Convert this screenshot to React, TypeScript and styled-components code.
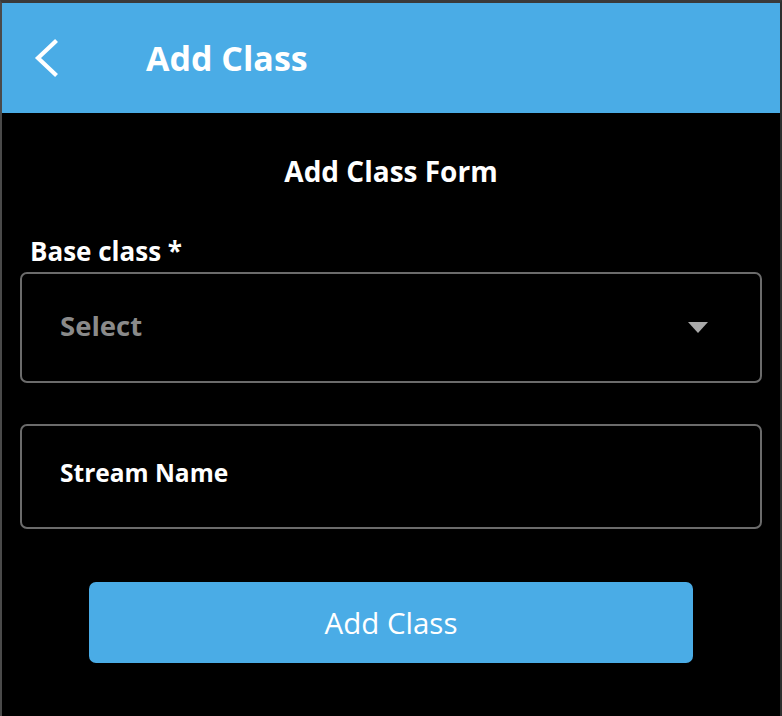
import React from "react";
import styled, { createGlobalStyle } from "styled-components";

const Global = createGlobalStyle`
  html, body { margin: 0; padding: 0; background: #000; }
  * { box-sizing: border-box; }
`;

const Frame = styled.div`
  width: 782px;
  height: 716px;
  background: #000;
  border-top: 3px solid #3a3a3a;
  border-left: 2px solid #4a4a4a;
  border-right: 2px solid #2e2e2e;
  font-family: "Open Sans", "Noto Sans", sans-serif;
  color: #fff;
  display: flex;
  flex-direction: column;
  overflow: hidden;
`;

const Header = styled.header`
  height: 110px;
  background: #4aace6;
  display: flex;
  align-items: center;
  padding-left: 30px;
`;

const BackButton = styled.button`
  background: none;
  border: none;
  padding: 0;
  width: 28px;
  height: 40px;
  display: flex;
  align-items: center;
  justify-content: center;
  cursor: pointer;
`;

const Title = styled.h1`
  margin: 0 0 0 86px;
  font-size: 34px;
  font-weight: 700;
  line-height: 40px;
`;

const Form = styled.form`
  display: flex;
  flex-direction: column;
  padding: 0 18px;
`;

const FormTitle = styled.h2`
  margin: 43px 0 0;
  text-align: center;
  font-size: 28px;
  font-weight: 700;
  line-height: 30px;
`;

const Label = styled.label`
  margin-top: 51px;
  padding-left: 10px;
  font-size: 26px;
  font-weight: 700;
  line-height: 28px;
`;

const Field = styled.div<{ $h: number; $mt: number }>`
  margin-top: ${(p) => p.$mt}px;
  height: ${(p) => p.$h}px;
  border: 2px solid #6b6b6b;
  border-radius: 7px;
  display: flex;
  align-items: center;
  padding: 0 52px 0 38px;
`;

const FieldText = styled.span<{ $muted?: boolean }>`
  flex: 1;
  font-size: ${(p) => (p.$muted ? "27.5px" : "24.5px")};
  font-weight: 700;
  line-height: 30px;
  margin-top: ${(p) => (p.$muted ? "-4px" : "-7px")};
  color: ${(p) => (p.$muted ? "#8a8a8a" : "#fff")};
`;

const Caret = styled.span`
  width: 0;
  height: 0;
  border-left: 10px solid transparent;
  border-right: 10px solid transparent;
  border-top: 11px solid #a9a9a9;
`;

const Submit = styled.button`
  align-self: center;
  margin-top: 53px;
  width: 604px;
  height: 81px;
  border: none;
  border-radius: 7px;
  background: #4aace6;
  color: #fff;
  font-family: "Open Sans", "Noto Sans", sans-serif;
  font-size: 29.5px;
  font-weight: 400;
  cursor: pointer;
`;

export default function App() {
  return (
    <>
      <Global />
      <Frame>
        <Header>
          <BackButton aria-label="Back">
            <svg width="28" height="40" viewBox="0 0 28 40">
              <path d="M23 4 L6 20 L23 36" fill="none" stroke="#fff" strokeWidth="4.2" strokeLinecap="square" />
            </svg>
          </BackButton>
          <Title>Add Class</Title>
        </Header>
        <Form onSubmit={(e) => e.preventDefault()}>
          <FormTitle>Add Class Form</FormTitle>
          <Label>Base class *</Label>
          <Field $h={111} $mt={7}>
            <FieldText $muted>Select</FieldText>
            <Caret />
          </Field>
          <Field $h={105} $mt={41}>
            <FieldText>Stream Name</FieldText>
          </Field>
          <Submit type="submit">Add Class</Submit>
        </Form>
      </Frame>
    </>
  );
}
